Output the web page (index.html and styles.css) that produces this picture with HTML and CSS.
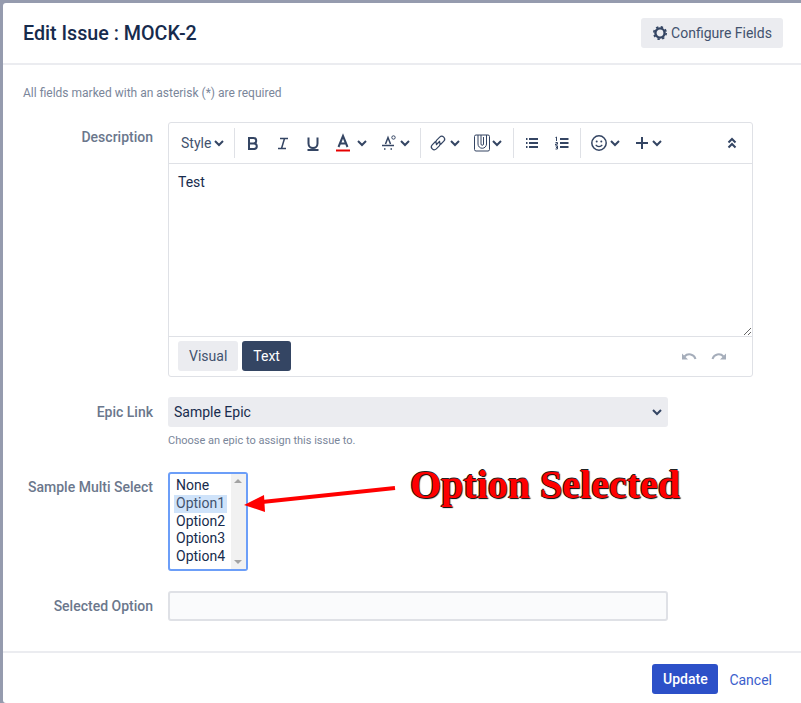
FILE: index.html
```html
<!DOCTYPE html>
<html lang="en">
<head>
<meta charset="utf-8">
<title>Edit Issue : MOCK-2</title>
<link rel="stylesheet" href="styles.css">
</head>
<body>
<div class="modal">
  <header class="modal-head">
    <h1 class="title">Edit Issue : MOCK-2</h1>
    <button class="config-btn" type="button">
      <svg class="gear" viewBox="0 0 16 16" width="16" height="16"><circle class="gear-ring" cx="8" cy="8" r="4.600"/><circle class="gear-teeth" cx="8" cy="8" r="6.200"/></svg>
      Configure Fields
    </button>
  </header>

  <main class="modal-body">
    <p class="required-note">All fields marked with an asterisk (*) are required</p>

    <div class="row row-desc">
      <label class="label">Description</label>
      <div class="editor">
        <div class="toolbar">
          <span class="style-txt">Style</span>
          <svg class="ch ml3" viewBox="0 0 10 10"><path d="M1 3l4 4 4-4"/></svg>
          <i class="sep ml10"></i>
          <svg class="ic ml6" viewBox="0 0 24 24"><path class="s2" d="M8 7h4.500a2.700 2.700 0 0 1 0 5.400H8zM8 12.400h5a2.800 2.800 0 0 1 0 5.600H8z"/></svg>
          <svg class="ic ml6" viewBox="0 0 24 24"><path class="s15" d="M9 7.500h8M7 17.500h8M13.500 7.500l-3 10"/></svg>
          <svg class="ic ml6" viewBox="0 0 24 24"><path class="s2" d="M7.500 6.500v6a4.500 4.500 0 0 0 9 0v-6M6.500 19h11"/></svg>
          <svg class="ic ml6" viewBox="0 0 24 24"><path class="s2" d="M7.500 16l4.500-11 4.500 11M9 12.500h6"/><path class="red" d="M5 19.500h14"/></svg>
          <svg class="ch ml2" viewBox="0 0 10 10"><path d="M1 3l4 4 4-4"/></svg>
          <svg class="ic ml9" viewBox="0 0 24 24"><path class="s15" d="M9.500 13l2.500-6.500 2.500 6.500M6 14.500h12M8 18h1.500M14.500 18h1.500"/><circle class="s1" cx="17.500" cy="6.500" r="1.700"/></svg>
          <svg class="ch" viewBox="0 0 10 10"><path d="M1 3l4 4 4-4"/></svg>
          <i class="sep ml10"></i>
          <svg class="ic ml5" viewBox="0 0 24 24"><path class="s12" d="M10 14l4-4M9.500 10.500l-3.300 3.300a2.900 2.900 0 0 0 4.100 4.100l3-3a2.900 2.900 0 0 0 0-3.900M14.500 13.500l3.300-3.300a2.900 2.900 0 0 0-4.100-4.100l-3 3a2.900 2.900 0 0 0 0 3.900"/></svg>
          <svg class="ch" viewBox="0 0 10 10"><path d="M1 3l4 4 4-4"/></svg>
          <svg class="ic ml10" viewBox="0 0 24 24"><rect class="s1" x="4.500" y="4" width="15" height="16" rx="1.500"/><path class="s1" d="M8 4v9a4.200 4.200 0 0 0 8.500 0V4M11 4v9a1.250 1.250 0 0 0 2.500 0V6"/></svg>
          <svg class="ch mln2" viewBox="0 0 10 10"><path d="M1 3l4 4 4-4"/></svg>
          <i class="sep ml11"></i>
          <svg class="ic ml6" viewBox="0 0 24 24"><path class="s2" d="M9 8h9M9 12h9M9 16h9M6 8h1.500M6 12h1.500M6 16h1.500"/></svg>
          <svg class="ic ml6" viewBox="0 0 24 24"><path class="s2" d="M10 8h8.500M10 12h8.500M10 16h8.500"/><path class="s1" d="M5.500 6.500l1-.5v4M5.500 11.500h2v1.500h-2v1h2M5.500 15h2v3h-2M6 16.500h1.500"/></svg>
          <i class="sep ml6"></i>
          <svg class="ic ml6" viewBox="0 0 24 24"><circle class="s15" cx="12" cy="12" r="7.200"/><circle class="dot" cx="9.700" cy="10.500" r="1"/><circle class="dot" cx="14.300" cy="10.500" r="1"/><path class="s12" d="M8.700 13.800a4 4 0 0 0 6.600 0"/></svg>
          <svg class="ch mln1" viewBox="0 0 10 10"><path d="M1 3l4 4 4-4"/></svg>
          <svg class="ic ml10" viewBox="0 0 24 24"><path class="s2" d="M12 6v12M6 12h12"/></svg>
          <svg class="ch mln2" viewBox="0 0 10 10"><path d="M1 3l4 4 4-4"/></svg>
          <svg class="ic push" viewBox="0 0 24 24"><path class="s2" d="M8.500 11.500L12 8l3.500 3.500M8.500 16.500L12 13l3.500 3.500"/></svg>
        </div>
        <textarea class="editor-text">Test</textarea>
        <div class="editor-foot">
          <button class="tab" type="button">Visual</button>
          <button class="tab tab-on" type="button">Text</button>
          <div class="history">
            <svg class="undo" viewBox="0 0 16 10"><path d="M1 8.500V2.500l6 6z" class="fill"/><path class="line" d="M3.500 5.500a6.500 6.500 0 0 1 11 2.500"/></svg>
            <svg class="undo" viewBox="0 0 16 10"><path d="M15 8.500V2.500l-6 6z" class="fill"/><path class="line" d="M12.500 5.500a6.500 6.500 0 0 0-11 2.500"/></svg>
          </div>
        </div>
      </div>
    </div>

    <div class="row row-epic">
      <label class="label">Epic Link</label>
      <div class="field">
        <select class="epic-select"><option>Sample Epic</option></select>
        <p class="field-hint">Choose an epic to assign this issue to.</p>
      </div>
    </div>

    <div class="row row-multi">
      <label class="label">Sample Multi Select</label>
      <div class="listbox">
        <ul class="options">
          <li class="opt">None</li>
          <li class="opt opt-on">Option1</li>
          <li class="opt">Option2</li>
          <li class="opt">Option3</li>
          <li class="opt">Option4</li>
        </ul>
        <div class="scrollbar"><i class="arrow-up"></i><i class="arrow-down"></i></div>
      </div>
    </div>

    <div class="row row-selected">
      <label class="label">Selected Option</label>
      <input class="text-input" type="text">
    </div>
  </main>

  <footer class="modal-foot">
    <button class="update-btn" type="button">Update</button>
    <a class="cancel-link" href="#">Cancel</a>
  </footer>

  <svg class="callout-arrow" viewBox="0 0 160 40" width="160" height="40"><path d="M151 10L18 24" stroke="#ff0000" stroke-width="4" fill="none"/><path d="M0 27L20 17 21 34z" fill="#ff0000"/></svg>
  <div class="callout-text">Option Selected</div>
</div>
</body>
</html>
```

FILE: styles.css
```css
* { box-sizing: border-box; }
html, body { height: 100%; }
body {
  margin: 0;
  background: #959bae;
  font-family: Roboto, "Liberation Sans", sans-serif;
  color: #172b4d;
  overflow: hidden;
}
.modal {
  position: relative;
  margin: 3px 0 0 3px;
  width: 798px;
  height: 700px;
  background: #fff;
  border-radius: 3px 0 0 3px;
  display: flex;
  flex-direction: column;
}
.modal-head {
  height: 62px;
  flex: none;
  border-bottom: 2px solid #ebecf0;
  display: flex;
  align-items: center;
  justify-content: space-between;
  padding: 0 18px 0 20px;
}
.title { margin: 1px 0 0; font-size: 19.700px; font-weight: 500; color: #172b4d; line-height: 24px; }
.config-btn {
  height: 30px;
  width: 142px;
  border: 0;
  border-radius: 3px;
  background: #ebecf0;
  color: #42526e;
  font: 14px Roboto, sans-serif;
  display: flex;
  align-items: center;
  justify-content: center;
  gap: 3px;
  padding: 0;
}
.gear { flex: none; }
.gear-ring { fill: none; stroke: #344563; stroke-width: 2.400; }
.gear-teeth { fill: none; stroke: #344563; stroke-width: 1.600; stroke-dasharray: 2.400 2.470; }
.modal-body { flex: 1; padding: 0 20px; }
.required-note { margin: 20px 0 0; font-size: 12px; line-height: 16px; color: #7a869a; height: 16px; }
.row { display: grid; grid-template-columns: 130px 1fr; column-gap: 15px; }
.row-desc { margin-top: 21px; }
.row-epic { margin-top: 20px; }
.row-multi { margin-top: 24px; }
.row-selected { margin-top: 20px; }
.label {
  text-align: right;
  font-size: 14px;
  font-weight: 500;
  color: #6b778c;
  line-height: 30px;
  white-space: nowrap;
}
.editor {
  width: 585px;
  height: 255px;
  border: 1px solid #dfe1e6;
  border-radius: 3px;
  display: flex;
  flex-direction: column;
}
.toolbar {
  height: 41px;
  flex: none;
  border-bottom: 1px solid #dfe1e6;
  display: flex;
  align-items: center;
  padding: 0 8px 0 12px;
}
.style-txt { font-size: 14px; color: #42526e; width: 30px; }
.sep { display: block; width: 1px; height: 30px; background: #dfe1e6; flex: none; }
.ic { width: 24px; height: 24px; flex: none; fill: none; }
.ch { width: 10px; height: 10px; flex: none; fill: none; stroke: #344563; stroke-width: 2; }
.s2, .s15, .s12, .s1 { fill: none; stroke: #344563; }
.s2 { stroke-width: 2; }
.s15 { stroke-width: 1.500; }
.s12 { stroke-width: 1.200; }
.s1 { stroke-width: 1; }
.red { stroke: #e60000; stroke-width: 2; fill: none; }
.dot { fill: #344563; }
.ml2 { margin-left: 2px; }
.ml3 { margin-left: 3px; }
.ml5 { margin-left: 5px; }
.ml6 { margin-left: 6px; }
.ml9 { margin-left: 9px; }
.ml10 { margin-left: 10px; }
.ml11 { margin-left: 11px; }
.mln1 { margin-left: -1px; }
.mln2 { margin-left: -2px; }
.push { margin-left: auto; }
.editor-text {
  display: block;
  flex: none;
  width: 100%;
  height: 172px;
  border: 0;
  outline: 0;
  resize: vertical;
  padding: 10px 9px;
  font: 14px/17px Roboto, sans-serif;
  color: #172b4d;
}
.editor-foot {
  flex: 1;
  border-top: 1px solid #dfe1e6;
  display: flex;
  align-items: center;
  padding: 0 9px 1px;
  gap: 4px;
}
.tab {
  height: 30px;
  padding: 0 11px;
  border: 0;
  border-radius: 3px;
  background: #ebecf0;
  color: #42526e;
  font: 14px Roboto, sans-serif;
}
.tab-on { background: #344563; color: #fff; }
.history { margin-left: auto; display: flex; gap: 14px; padding-right: 16px; }
.undo { width: 16px; height: 10px; display: block; }
.fill { fill: #a5adba; }
.line { fill: none; stroke: #a5adba; stroke-width: 2; }
.field { width: 500px; }
.epic-select {
  display: block;
  width: 500px;
  height: 30px;
  border: 0;
  border-radius: 3px;
  appearance: none;
  background: #ebecf0 url("data:image/svg+xml,%3Csvg xmlns='http://www.w3.org/2000/svg' width='10' height='7' viewBox='0 0 10 7'%3E%3Cpath d='M1 1l4 4 4-4' fill='none' stroke='%23344563' stroke-width='2'/%3E%3C/svg%3E") no-repeat 484px 12px;
  color: #172b4d;
  font: 14px Roboto, sans-serif;
  padding: 0 6px;
  outline: 0;
}
.field-hint { margin: 7px 0 0; font-size: 11px; line-height: 14px; color: #7a869a; }
.listbox {
  width: 80px;
  height: 99px;
  border: 2px solid #6c9ef8;
  border-radius: 3px;
  display: flex;
  background: #fff;
}
.options {
  list-style: none;
  margin: 0;
  padding: 3px 4px 0 4px;
  flex: 1;
}
.opt {
  height: 17.750px;
  line-height: 17.750px;
  padding-left: 2px;
  font-size: 14px;
  color: #172b4d;
  white-space: nowrap;
}
.opt-on { background: #cfe3fa; color: #42526e; }
.scrollbar {
  width: 15px;
  flex: none;
  background: #f1f1f1;
  position: relative;
}
.arrow-up, .arrow-down {
  position: absolute;
  left: 3px;
  width: 0;
  height: 0;
  border-left: 4px solid transparent;
  border-right: 4px solid transparent;
}
.arrow-up { top: 5px; border-bottom: 4px solid #a3a3a3; }
.arrow-down { bottom: 5px; border-top: 4px solid #a3a3a3; }
.text-input {
  width: 500px;
  height: 30px;
  border: 2px solid #dfe1e6;
  border-radius: 3px;
  background: #fafbfc;
  outline: 0;
  display: block;
}
.modal-foot {
  height: 52px;
  flex: none;
  border-top: 2px solid #ebecf0;
  display: flex;
  align-items: flex-start;
  justify-content: flex-end;
  padding: 11px 29px 0 0;
  gap: 11px;
}
.update-btn {
  width: 66px;
  height: 30px;
  border: 0;
  border-radius: 3px;
  background: #2c50c8;
  color: #fff;
  font: 500 14px Roboto, sans-serif;
  padding: 0;
}
.cancel-link { color: #3b60cc; font-size: 14px; line-height: 32px; text-decoration: none; }
.callout-arrow { position: absolute; left: 241px; top: 475px; }
.callout-text {
  position: absolute;
  left: 407px;
  top: 459px;
  font: bold 40px/46px "Liberation Serif", serif;
  color: #ff0000;
  text-shadow: 1px 1px 1px #000, -1px 0 0 #222, 0 -1px 0 #222;
  white-space: nowrap;
}
```
